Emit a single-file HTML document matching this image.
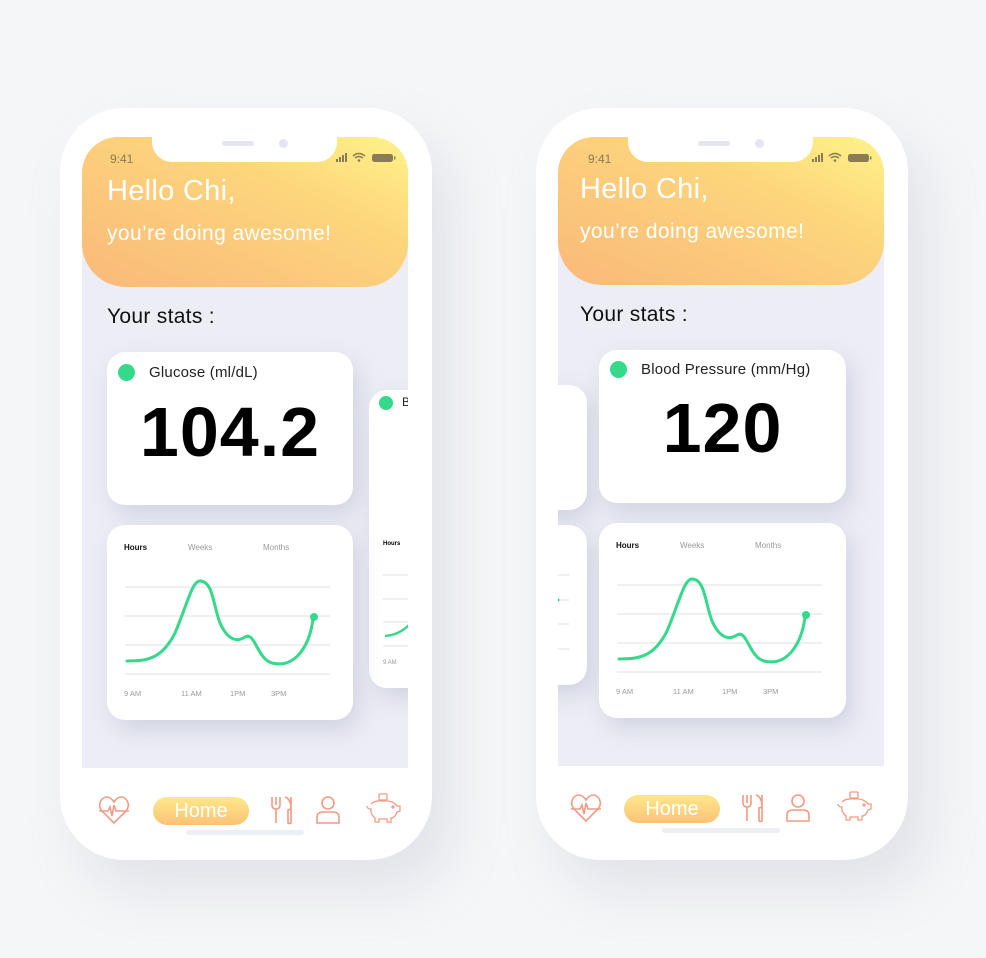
<!DOCTYPE html>
<html><head><meta charset="utf-8">
<style>
*{margin:0;padding:0;box-sizing:border-box}
body{width:986px;height:958px;background:#f5f6f8;font-family:"Liberation Sans",sans-serif;position:relative;overflow:hidden}
.phone{position:absolute;width:372px;height:752px;background:#fff;border-radius:64px;box-shadow:20px 30px 50px rgba(170,175,190,0.25)}
.screen{position:absolute;left:22px;top:29px;width:326px;height:705px;border-radius:36px;background:#ecedf5;overflow:hidden}
.header{position:absolute;left:0;top:0;width:326px;height:150px;border-radius:30px 30px 44px 44px;background:linear-gradient(205deg,#fff38a 0%,#fdd67c 35%,#f9b97a 100%)}
.notch{position:absolute;left:70px;top:-2px;width:185px;height:27px;background:#fff;border-radius:0 0 20px 20px}
.notch:before{content:"";position:absolute;left:70px;top:6px;width:32px;height:5px;border-radius:3px;background:#e3e6ee}
.notch:after{content:"";position:absolute;left:127px;top:4px;width:9px;height:9px;border-radius:50%;background:#e3e6ee}
.time{position:absolute;left:28px;top:15px;font-size:12px;color:#8a7a55}
.h1{position:absolute;left:25px;top:38px;font-size:29px;color:#fff;letter-spacing:0.3px}
.h2{position:absolute;left:25px;top:85px;font-size:21px;color:#fff;letter-spacing:0.4px}
.stats{position:absolute;left:25px;top:168px;font-size:21px;color:#111;letter-spacing:0.3px}
.card{position:absolute;background:#fff;border-radius:18px;box-shadow:6px 10px 22px rgba(160,165,190,0.35)}
.dot{position:absolute;width:17px;height:17px;border-radius:50%;background:#35d98a}
.lbl{position:absolute;font-size:15px;color:#222;letter-spacing:0.2px}
.big{position:absolute;width:100%;text-align:center;font-weight:bold;color:#000;font-size:70px;letter-spacing:1px}
.tab{position:absolute;left:0;top:631px;width:326px;height:74px;background:#fff}
.home{position:absolute;top:29px;width:96px;height:28px;border-radius:14px;background:linear-gradient(180deg,#ffe88a,#fbc276);color:#fff;font-size:20px;text-align:center;line-height:28px}
.bar{position:absolute;left:104px;top:62px;width:118px;height:5px;border-radius:3px;background:#eceff3}
</style></head><body>

<!-- PHONE 1 -->
<div class="phone" style="left:60px;top:108px">
<div class="screen">
 <div class="header"></div>
 <div class="notch"></div>
 <div class="time">9:41</div>
 <svg style="position:absolute;left:254px;top:15px" width="62" height="12"><g fill="#8a7a55"><rect x="0" y="7" width="2" height="3"/><rect x="3" y="5" width="2" height="5"/><rect x="6" y="3" width="2" height="7"/><rect x="9" y="1" width="2" height="9"/></g><path d="M17 4 Q23 -1 29 4 M19 6 Q23 3 27 6" stroke="#8a7a55" stroke-width="1.5" fill="none"/><circle cx="23" cy="8.5" r="1.3" fill="#8a7a55"/><rect x="36" y="2" width="21" height="8" rx="2.5" fill="#8a7a55"/><rect x="58" y="4.5" width="1.5" height="3" fill="#8a7a55"/></svg>
 <div class="h1">Hello Chi,</div>
 <div class="h2">you’re doing awesome!</div>
 <div class="stats">Your stats :</div>

 <div class="card" style="left:25px;top:215px;width:246px;height:153px">
  <div class="dot" style="left:11px;top:12px"></div>
  <div class="lbl" style="left:42px;top:12px">Glucose (ml/dL)</div>
  <div class="big" style="top:40px">104.2</div>
 </div>
 <div class="card" style="left:287px;top:253px;width:70px;height:298px">
  <div class="dot" style="left:10px;top:6px;width:14px;height:14px"></div>
  <div class="lbl" style="left:33px;top:5px;font-size:12px">B</div>
 </div>
 <div class="card" style="left:287px;top:388px;width:70px;height:163px;box-shadow:none">
  <div style="position:absolute;left:14px;top:16px;font-size:6px;font-weight:bold">Hours</div>
  <svg style="position:absolute;left:0;top:0" width="70" height="163"><g stroke="#e8e8ec" stroke-width="1.3"><line x1="14" y1="50" x2="70" y2="50"/><line x1="14" y1="74" x2="70" y2="74"/><line x1="14" y1="97" x2="70" y2="97"/><line x1="14" y1="121" x2="70" y2="121"/></g><path d="M16 111 Q30 110 40 100" stroke="#35d98a" stroke-width="2.5" fill="none"/><text x="14" y="139" font-size="6" fill="#999" font-family="Liberation Sans">9 AM</text></svg>
 </div>

 <div class="card" style="left:25px;top:388px;width:246px;height:195px">
  <svg width="246" height="195" style="position:absolute;left:0;top:0" font-family="Liberation Sans">
   <text x="17" y="25" font-size="8" font-weight="bold" fill="#111">Hours</text>
   <text x="81" y="25" font-size="8" fill="#999">Weeks</text>
   <text x="156" y="25" font-size="8" fill="#999">Months</text>
   <g stroke="#e6e6ea" stroke-width="1.3"><line x1="18" y1="62" x2="223" y2="62"/><line x1="18" y1="91" x2="223" y2="91"/><line x1="18" y1="120" x2="223" y2="120"/><line x1="18" y1="149" x2="223" y2="149"/></g>
   <path d="M20 136 C40 136 55 134 68 108 C80 80 85 56 93 56 C106 56 106 80 113 98 C122 118 132 116 138 112 C148 106 150 134 165 138 C190 144 203 118 206 94" stroke="#35d98a" stroke-width="3" fill="none" stroke-linecap="round"/>
   <circle cx="207" cy="92" r="4" fill="#35d98a"/>
   <g font-size="7.5" fill="#999"><text x="17" y="171">9 AM</text><text x="74" y="171">11 AM</text><text x="123" y="171">1PM</text><text x="164" y="171">3PM</text></g>
  </svg>
 </div>

 <div class="tab">
  <svg style="position:absolute;left:16px;top:27px" width="32" height="30" fill="none" stroke="#f39a82" stroke-width="1.6"><path d="M16 28 L4 16 C-1 10 3 2 9 2 C12 2 14 4 16 7 C18 4 20 2 23 2 C29 2 33 10 28 16 Z"/><path d="M1 16 H10 L12 12 L14 21 L16 10 L18 16 H31"/></svg>
  <div class="home" style="left:71px">Home</div>
  <svg style="position:absolute;left:188px;top:27px" width="24" height="30" fill="none" stroke="#f39a82" stroke-width="1.6"><path d="M2 2 V10 Q2 14 6 14 V28 M10 2 V10 Q10 14 6 14 M6 2 V10"/><path d="M15 2 Q21 4 21 14 L18 15 V28 Q20 29 21 28 V2"/></svg>
  <svg style="position:absolute;left:232px;top:27px" width="28" height="30" fill="none" stroke="#f39a82" stroke-width="1.6"><circle cx="14" cy="8" r="6"/><path d="M3 28 V22 Q3 17 9 17 H19 Q25 17 25 22 V28 Z"/></svg>
  <svg style="position:absolute;left:283px;top:24px" width="38" height="32" fill="none" stroke="#f39a82" stroke-width="1.3"><rect x="14" y="2" width="8" height="6" rx="1"/><path d="M6 12 Q10 8 18 9 Q28 8 32 14 L35 14 L35 19 L32 20 Q30 26 26 26 V30 H22 V27 H14 V30 H10 V26 Q5 22 6 17 Q2 17 2 14"/><circle cx="28" cy="15" r="1"/></svg>
  <div class="bar"></div>
 </div>
</div>
</div>

<!-- PHONE 2 -->
<div class="phone" style="left:536px;top:108px">
<div class="screen">
 <div class="header" style="height:148px"></div>
 <div class="notch"></div>
 <div class="time" style="left:30px">9:41</div>
 <svg style="position:absolute;left:254px;top:15px" width="62" height="12"><g fill="#8a7a55"><rect x="0" y="7" width="2" height="3"/><rect x="3" y="5" width="2" height="5"/><rect x="6" y="3" width="2" height="7"/><rect x="9" y="1" width="2" height="9"/></g><path d="M17 4 Q23 -1 29 4 M19 6 Q23 3 27 6" stroke="#8a7a55" stroke-width="1.5" fill="none"/><circle cx="23" cy="8.5" r="1.3" fill="#8a7a55"/><rect x="36" y="2" width="21" height="8" rx="2.5" fill="#8a7a55"/><rect x="58" y="4.5" width="1.5" height="3" fill="#8a7a55"/></svg>
 <div class="h1" style="left:22px;top:36px">Hello Chi,</div>
 <div class="h2" style="left:22px;top:83px">you’re doing awesome!</div>
 <div class="stats" style="left:22px;top:166px">Your stats :</div>

 <div class="card" style="left:-40px;top:248px;width:69px;height:125px"></div>
 <div class="card" style="left:-40px;top:388px;width:69px;height:160px">
  <svg width="69" height="160" style="position:absolute;left:0;top:0"><g stroke="#e6e6ea" stroke-width="1.3"><line x1="40" y1="50" x2="51" y2="50"/><line x1="40" y1="75" x2="51" y2="75"/><line x1="40" y1="99" x2="51" y2="99"/><line x1="40" y1="124" x2="51" y2="124"/></g><circle cx="40" cy="75" r="1.5" fill="#35d98a"/></svg>
 </div>

 <div class="card" style="left:41px;top:213px;width:247px;height:153px">
  <div class="dot" style="left:11px;top:11px"></div>
  <div class="lbl" style="left:42px;top:11px">Blood Pressure (mm/Hg)</div>
  <div class="big" style="top:38px">120</div>
 </div>

 <div class="card" style="left:41px;top:386px;width:247px;height:195px">
  <svg width="246" height="195" style="position:absolute;left:0;top:0" font-family="Liberation Sans">
   <text x="17" y="25" font-size="8" font-weight="bold" fill="#111">Hours</text>
   <text x="81" y="25" font-size="8" fill="#999">Weeks</text>
   <text x="156" y="25" font-size="8" fill="#999">Months</text>
   <g stroke="#e6e6ea" stroke-width="1.3"><line x1="18" y1="62" x2="223" y2="62"/><line x1="18" y1="91" x2="223" y2="91"/><line x1="18" y1="120" x2="223" y2="120"/><line x1="18" y1="149" x2="223" y2="149"/></g>
   <path d="M20 136 C40 136 55 134 68 108 C80 80 85 56 93 56 C106 56 106 80 113 98 C122 118 132 116 138 112 C148 106 150 134 165 138 C190 144 203 118 206 94" stroke="#35d98a" stroke-width="3" fill="none" stroke-linecap="round"/>
   <circle cx="207" cy="92" r="4" fill="#35d98a"/>
   <g font-size="7.5" fill="#999"><text x="17" y="171">9 AM</text><text x="74" y="171">11 AM</text><text x="123" y="171">1PM</text><text x="164" y="171">3PM</text></g>
  </svg>
 </div>

 <div class="tab" style="top:629px;height:76px">
  <svg style="position:absolute;left:12px;top:27px" width="32" height="30" fill="none" stroke="#f39a82" stroke-width="1.6"><path d="M16 28 L4 16 C-1 10 3 2 9 2 C12 2 14 4 16 7 C18 4 20 2 23 2 C29 2 33 10 28 16 Z"/><path d="M1 16 H10 L12 12 L14 21 L16 10 L18 16 H31"/></svg>
  <div class="home" style="left:66px">Home</div>
  <svg style="position:absolute;left:183px;top:27px" width="24" height="30" fill="none" stroke="#f39a82" stroke-width="1.6"><path d="M2 2 V10 Q2 14 6 14 V28 M10 2 V10 Q10 14 6 14 M6 2 V10"/><path d="M15 2 Q21 4 21 14 L18 15 V28 Q20 29 21 28 V2"/></svg>
  <svg style="position:absolute;left:226px;top:27px" width="28" height="30" fill="none" stroke="#f39a82" stroke-width="1.6"><circle cx="14" cy="8" r="6"/><path d="M3 28 V22 Q3 17 9 17 H19 Q25 17 25 22 V28 Z"/></svg>
  <svg style="position:absolute;left:278px;top:24px" width="38" height="32" fill="none" stroke="#f39a82" stroke-width="1.3"><rect x="14" y="2" width="8" height="6" rx="1"/><path d="M6 12 Q10 8 18 9 Q28 8 32 14 L35 14 L35 19 L32 20 Q30 26 26 26 V30 H22 V27 H14 V30 H10 V26 Q5 22 6 17 Q2 17 2 14"/><circle cx="28" cy="15" r="1"/></svg>
  <div class="bar"></div>
 </div>
</div>
</div>
</body></html>
